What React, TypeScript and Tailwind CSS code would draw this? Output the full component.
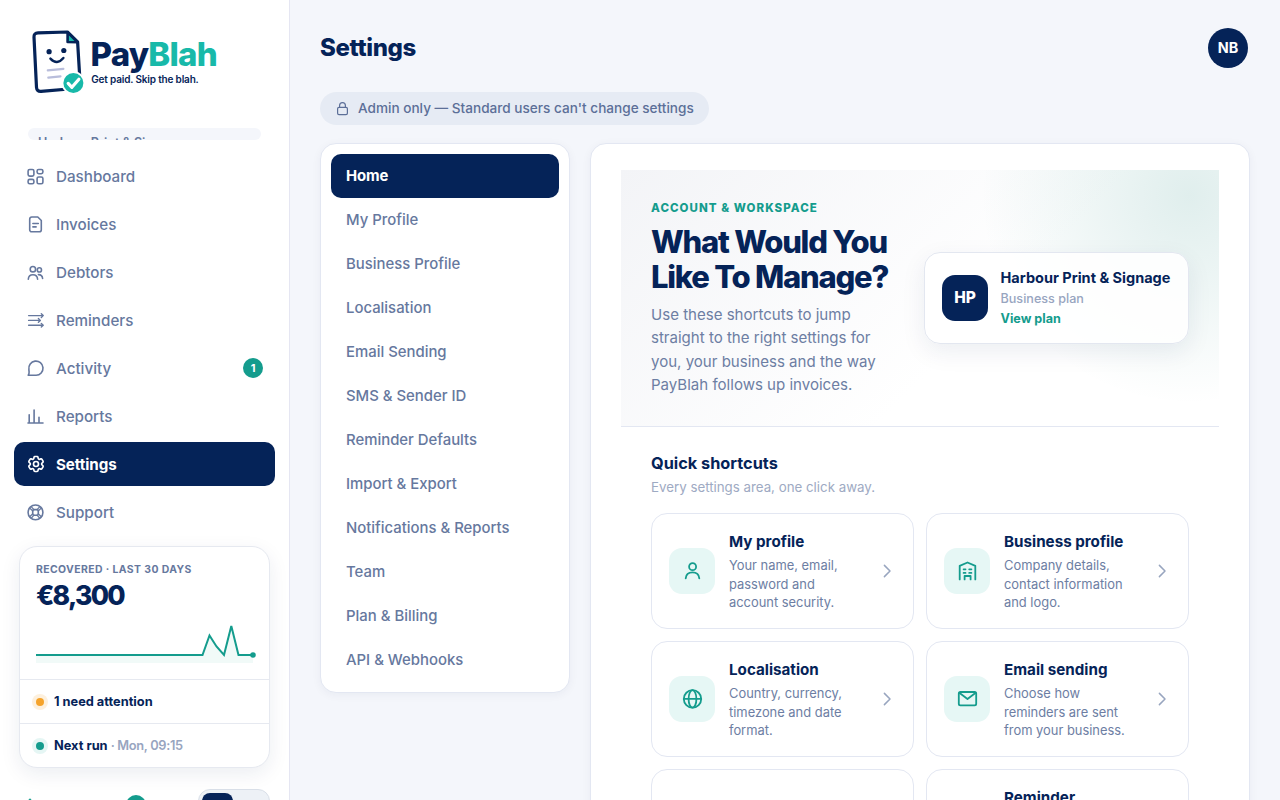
import React from 'react';
import { HiOutlineCog6Tooth } from 'react-icons/hi2';

interface NavItem {
  label: string;
  icon: React.ReactNode;
  badge?: number;
}

interface Shortcut {
  title: string;
  text: string;
  icon: React.ReactNode;
}

const NavSvg: React.FC<{ children: React.ReactNode }> = ({ children }) => (
  <svg
    className="w-5 h-5"
    viewBox="0 0 20 20"
    fill="none"
    stroke="currentColor"
    strokeWidth="1.6"
    strokeLinecap="round"
    strokeLinejoin="round"
  >
    {children}
  </svg>
);

const TileSvg: React.FC<{ children: React.ReactNode }> = ({ children }) => (
  <svg
    className="w-[22px] h-[22px]"
    viewBox="0 0 22 22"
    fill="none"
    stroke="currentColor"
    strokeWidth="1.8"
    strokeLinecap="round"
    strokeLinejoin="round"
  >
    {children}
  </svg>
);

const navItems: NavItem[] = [
  {
    label: 'Dashboard',
    icon: (
      <NavSvg>
        <rect x="2.1" y="3.5" width="5.8" height="6.6" rx="1.6" />
        <rect x="11.1" y="3.5" width="5.8" height="4.2" rx="1.6" />
        <rect x="2.1" y="13.4" width="5.8" height="4.4" rx="1.6" />
        <rect x="11.1" y="11" width="5.8" height="6.8" rx="1.6" />
      </NavSvg>
    ),
  },
  {
    label: 'Invoices',
    icon: (
      <NavSvg>
        <path d="M5.7 3h6.1l3.5 3.5v9.2a2.1 2.1 0 0 1-2.1 2.1H5.7a2 2 0 0 1-2-2.1V5.1A2 2 0 0 1 5.7 3Z" />
        <path d="M6.9 9.5h5.4M6.9 12.9h3.2" />
      </NavSvg>
    ),
  },
  {
    label: 'Debtors',
    icon: (
      <NavSvg>
        <circle cx="6.9" cy="7.2" r="2.7" />
        <circle cx="13.4" cy="7.9" r="2.1" />
        <path d="M2.3 17.2c.2-2.9 2-4.4 4.6-4.4s4.5 1.5 4.7 4.4" />
        <path d="M12.4 12.6c2.5 0 4 1.5 4.2 3.9" />
      </NavSvg>
    ),
  },
  {
    label: 'Reminders',
    icon: (
      <NavSvg>
        <path strokeWidth="1.4" d="M2.6 5.6h14M2.6 10.4h11.4M2.6 15.2h14" />
        <path strokeWidth="1.4" d="m15.3 3.8 1.9 1.8-1.9 1.8M12.4 8.6l1.9 1.8-1.9 1.8M15.3 13.4l1.9 1.8-1.9 1.8" />
      </NavSvg>
    ),
  },
  {
    label: 'Activity',
    badge: 1,
    icon: (
      <NavSvg>
        <path d="M2.2 17.3c.8-1 1-2 .9-3.4-.1-.9-.2-1.7-.2-2.5a7.1 7.1 0 1 1 7.2 5.9Z" />
      </NavSvg>
    ),
  },
  {
    label: 'Reports',
    icon: (
      <NavSvg>
        <path d="M2 17h15M3.2 16.6V8.7M8.1 16.6V4M13 16.6v-5.4" />
      </NavSvg>
    ),
  },
  { label: 'Settings', icon: <HiOutlineCog6Tooth className="w-5 h-5 -ml-[0.5px]" strokeWidth={2} /> },
  {
    label: 'Support',
    icon: (
      <NavSvg>
        <circle cx="9.5" cy="10.4" r="7.4" />
        <rect x="6.7" y="7.6" width="5.6" height="5.6" rx="1.5" />
        <path
          strokeWidth="1.2"
          d="M3.9 6.3 6.8 9M5.4 4.8 8 7.7M15.1 6.3 12.2 9M13.6 4.8 11 7.7M3.9 14.5l2.9-2.7M5.4 16 8 13.1M15.1 14.5l-2.9-2.7M13.6 16 11 13.1"
        />
      </NavSvg>
    ),
  },
];

const settingsTabs = [
  'Home',
  'My Profile',
  'Business Profile',
  'Localisation',
  'Email Sending',
  'SMS & Sender ID',
  'Reminder Defaults',
  'Import & Export',
  'Notifications & Reports',
  'Team',
  'Plan & Billing',
  'API & Webhooks',
];

const shortcuts: Shortcut[] = [
  {
    title: 'My profile',
    text: 'Your name, email, password and account security.',
    icon: (
      <TileSvg>
        <circle cx="11.6" cy="6.7" r="3.5" />
        <path d="M4.7 18.4c.3-3.9 2.8-6 6.8-6s6.5 2.1 6.8 6" />
      </TileSvg>
    ),
  },
  {
    title: 'Business profile',
    text: 'Company details, contact information and logo.',
    icon: (
      <TileSvg>
        <path d="M3.7 19.4V5.8L11.5 2.5l7.8 3.3v13.6" />
        <path d="M7.6 9.3h1.9M13.2 9.3h2.2M7.6 12.9h1.9M13.2 12.9h2.2M8.6 19.4v-3.4h6v3.4" />
      </TileSvg>
    ),
  },
  {
    title: 'Localisation',
    text: 'Country, currency, timezone and date format.',
    icon: (
      <TileSvg>
        <circle cx="11.5" cy="10.9" r="8.7" />
        <ellipse cx="11.5" cy="10.9" rx="3.9" ry="8.7" />
        <path d="M2.8 10.9h17.4" />
      </TileSvg>
    ),
  },
  {
    title: 'Email sending',
    text: 'Choose how reminders are sent from your business.',
    icon: (
      <TileSvg>
        <rect x="2.8" y="4" width="17.4" height="13.4" rx="1.6" />
        <path d="m3.6 5 7.9 6 7.9-6" />
      </TileSvg>
    ),
  },
  { title: '', text: '', icon: null },
  { title: 'Reminder defaults', text: '', icon: null },
];

const Logo = () => (
  <svg className="block w-[190px] h-[70px]" viewBox="0 0 190 70">
    <path
      d="M8 5.9 37.4 5 47.6 14.8 50.4 61 11 64.4Q6.8 64.7 6.5 60.4L4 10.2Q3.8 6 8 5.9Z"
      fill="#fff"
      stroke="#052358"
      strokeWidth="3.2"
      strokeLinejoin="round"
    />
    <path d="M37.6 5.4v9.6l9.8.2Z" fill="#18b9a9" stroke="#052358" strokeWidth="2.6" strokeLinejoin="round" />
    <circle cx="19.1" cy="24.7" r="2.6" fill="#052358" />
    <circle cx="33.8" cy="23.5" r="2.6" fill="#052358" />
    <path d="M20.4 31.6q6.6 7 13-.6" fill="none" stroke="#052358" strokeWidth="2.4" strokeLinecap="round" />
    <path d="m17.8 43.4 15.6-1.6M18.3 50.6l12.2-1.3" fill="none" stroke="#b8bddb" strokeWidth="2.2" strokeLinecap="round" />
    <circle cx="43.4" cy="56" r="11.8" fill="#fff" />
    <circle cx="43.4" cy="56" r="10" fill="#18b9a9" />
    <path d="m38.2 56.4 3.7 3.9 7-8.1" fill="none" stroke="#fff" strokeWidth="3.2" strokeLinecap="round" strokeLinejoin="round" />
    <text x="60.6" y="39.2" className="font-['Inter'] text-[33px] font-extrabold" textLength="127" lengthAdjust="spacing" fill="#052358">
      Pay<tspan fill="#18b9a9">Blah</tspan>
    </text>
    <text x="61.3" y="56" className="font-['Inter'] text-[10px] font-semibold" textLength="107.5" lengthAdjust="spacing" fill="#052358">
      Get paid. Skip the blah.
    </text>
  </svg>
);

const RecoveredCard = () => (
  <div className="mx-[5px] mt-3 bg-white border border-[#e6e9f0] rounded-[18px] shadow-[0_6px_20px_rgba(5,35,88,0.08)]">
    <div className="px-4 pt-4 h-[132px]">
      <div className="text-[10.4px] leading-[13px] font-bold tracking-[0.04em] text-[#66789e]">
        RECOVERED · LAST 30 DAYS
      </div>
      <div className="mt-[3px] text-[26.5px] leading-8 font-extrabold tracking-[-0.065em] text-[#052358]">€8,300</div>
      <svg className="block mt-2 w-[221px] h-[44px]" viewBox="0 0 221 44">
        <path d="M0 36H166.5L173.5 16.5 180.5 27.5 188 36 195.3 7 202.5 36H217V44H0Z" fill="#f1faf8" />
        <path d="M0 36H166.5L173.5 16.5 180.5 27.5 188 36 195.3 7 202.5 36H217" fill="none" stroke="#149c8d" strokeWidth="2" />
        <circle cx="217" cy="36" r="2.8" fill="#149c8d" />
      </svg>
    </div>
    <div className="flex items-center gap-[10px] h-11 px-4 border-t border-[#e6e9f0] text-[12.8px] font-bold text-[#052358]">
      <span className="w-2 h-2 rounded-full bg-[#f5a32b] shadow-[0_0_0_4px_#fdf0dd]" />
      1 need attention
    </div>
    <div className="flex items-center gap-[10px] h-11 px-4 border-t border-[#e6e9f0] text-[12.8px] font-bold text-[#052358]">
      <span className="w-2 h-2 rounded-full bg-[#149c8d] shadow-[0_0_0_4px_#e5f6f4]" />
      <span>
        Next run <span className="font-semibold tracking-[-0.025em] text-[#98a5bf]">· Mon, 09:15</span>
      </span>
    </div>
  </div>
);

const Sidebar = () => (
  <aside className="flex flex-col shrink-0 w-[290px] h-full bg-white border-r border-[#e5e6f2] overflow-hidden">
    <div className="pl-[30px] pt-[27px] h-[128px] shrink-0">
      <Logo />
    </div>
    <div className="mx-7 h-3 shrink-0 overflow-hidden rounded-lg bg-[#f4f6fb]">
      <div className="h-8 px-[10px] pt-[7px] text-[12.5px] leading-4 font-semibold text-[#66789e]">
        Harbour Print & Signage
      </div>
    </div>
    <nav className="flex flex-col gap-1 px-[14px] pt-[14px] shrink-0">
      {navItems.map(({ label, icon, badge }) => (
        <a
          key={label}
          className={`flex items-center h-11 px-3 rounded-[10px] text-[15.2px] ${
            label === 'Settings' ? 'bg-[#052358] text-white font-bold tracking-[-0.005em]' : 'text-[#66789e] font-medium'
          }`}
        >
          <span className="w-[30px]">{icon}</span>
          <span className="pt-[2px]">{label}</span>
          {badge && (
            <span className="flex items-center justify-center ml-auto w-5 h-5 rounded-full bg-[#149c8d] text-[11px] font-bold text-white">
              {badge}
            </span>
          )}
        </a>
      ))}
    </nav>
    <div className="px-[14px] shrink-0">
      <RecoveredCard />
    </div>
    {/* Language and theme footer, runs past the fold */}
    <div className="flex items-start mt-[21px] pl-[26px] pr-[19px] shrink-0">
      <span className="mt-[11px] w-2 h-2 rotate-45 bg-[#149c8d]" />
      <span className="ml-[92px] mt-[6px] w-5 h-5 rounded-full bg-[#149c8d]" />
      <div className="ml-auto p-[3px] w-[72px] h-9 rounded-xl border border-[#d9dfe8] bg-[#edf1f6]">
        <div className="w-[31px] h-7 rounded-lg bg-[#052358]" />
      </div>
    </div>
  </aside>
);

const Hero = () => (
  <section className="flex items-center justify-between h-[257px] px-[30px] border-b border-[#e3e7f2] bg-[radial-gradient(circle_at_95%_10%,rgba(15,125,115,0.13),transparent_34%),linear-gradient(135deg,#f3f4f7_0%,#fff_60%)]">
    <div className="w-[245px]">
      <div className="text-[11.5px] leading-4 font-extrabold tracking-[0.092em] text-[#149c8d]">ACCOUNT & WORKSPACE</div>
      <h2 className="mt-2 text-[31px] leading-[35px] font-extrabold tracking-[-0.04em] text-[#052358]">
        What Would You
        <br />
        Like To Manage?
      </h2>
      <p className="mt-[9px] text-[15.05px] leading-[23.4px] text-[#6d7ea3]">
        Use these shortcuts to jump
        <br />
        straight to the right settings for
        <br />
        you, your business and the way
        <br />
        PayBlah follows up invoices.
      </p>
    </div>
    <div className="flex items-center gap-3 w-[265px] h-[92px] pl-[17px] rounded-2xl border border-[#e3e7f0] bg-white/90 shadow-[0_8px_24px_rgba(5,35,88,0.08)]">
      <div className="flex items-center justify-center shrink-0 w-[46px] h-[46px] rounded-[13px] bg-[#052358] text-[15.5px] font-extrabold text-white">
        HP
      </div>
      <div className="pt-px pl-[0.5px] whitespace-nowrap">
        <div className="-mt-px text-[14.5px] leading-5 font-bold text-[#052358]">Harbour Print & Signage</div>
        <div className="mt-px text-[12.6px] leading-5 font-medium text-[#98a5bf]">Business plan</div>
        <div className="text-[12.6px] leading-5 font-bold text-[#149c8d]">View plan</div>
      </div>
    </div>
  </section>
);

const ShortcutCard: React.FC<Shortcut> = ({ title, text, icon }) => (
  <a className="flex items-center h-[116px] pl-[17px] pr-4 rounded-2xl border border-[#e3e7f2] bg-white">
    {icon && (
      <span className="flex items-center justify-center shrink-0 w-[46px] h-[46px] rounded-[13px] bg-[#e6f7f5] text-[#149c8d]">
        {icon}
      </span>
    )}
    <span className={`flex flex-col self-start mt-[17px] w-[126px] ${icon ? 'ml-[14px]' : 'ml-[60px]'}`}>
      <span className="text-[15.2px] leading-[22px] font-bold text-[#052358]">{title}</span>
      <span className="mt-1 text-[12.9px] leading-[18.5px] text-[#6d7ea3]">{text}</span>
    </span>
    <svg className="ml-auto w-5 h-5 text-[#98a5bf]" viewBox="0 0 20 20" fill="none" stroke="currentColor" strokeWidth="1.5" strokeLinecap="round" strokeLinejoin="round">
      <path d="m7.4 4.4 5.6 5.6-5.6 5.6" />
    </svg>
  </a>
);

const App = () => {
  return (
    <div className="flex w-full h-screen overflow-hidden bg-[#f4f6fb] font-['Inter',sans-serif]">
      <Sidebar />
      <main className="flex-1 min-w-0 pl-[30px] pr-[30px] pt-7">
        <header className="flex items-center justify-between h-10 pr-[2px]">
          <h1 className="text-2xl font-extrabold tracking-[-0.015em] text-[#052358]">Settings</h1>
          <div className="flex items-center justify-center w-10 h-10 rounded-full bg-[#052358] text-[14.4px] font-bold text-white">
            NB
          </div>
        </header>

        <div className="flex items-center mt-6 w-[389px] h-[33px] pl-4 rounded-full bg-[#e6ebf4] text-[13.6px] font-medium whitespace-nowrap text-[#5c6f98]">
          <svg className="mr-2 w-[14px] h-[15px]" viewBox="0 0 14 15" fill="none" stroke="currentColor" strokeWidth="1.2">
            <rect x="1.6" y="6.4" width="9.8" height="7.2" rx="1.4" />
            <path d="M3.6 6.4V4.6a2.9 2.9 0 0 1 5.8 0v1.8" />
          </svg>
          Admin only — Standard users can't change settings
        </div>

        <div className="flex items-start gap-5 mt-[18px]">
          <nav className="w-[250px] p-[10px] rounded-2xl border border-[#e3e7f2] bg-white shadow-[0_2px_10px_rgba(5,35,88,0.05)]">
            {settingsTabs.map((tab, i) => (
              <a
                key={tab}
                className={`flex items-center h-11 px-[15px] rounded-[10px] text-[14.9px] ${
                  i === 0 ? 'bg-[#052358] text-white font-bold tracking-[-0.01em]' : 'text-[#66789e] font-medium'
                }`}
              >
                {tab}
              </a>
            ))}
          </nav>

          <div className="flex-1 h-[900px] px-[30px] pt-[26px] rounded-2xl border border-[#e3e7f2] bg-white shadow-[0_2px_10px_rgba(5,35,88,0.05)]">
            <Hero />
            <section className="px-[30px] pt-6">
              <h3 className="text-[16.3px] leading-6 font-bold text-[#052358]">Quick shortcuts</h3>
              <p className="mt-[2px] text-[13.3px] leading-5 text-[#9eaac3]">Every settings area, one click away.</p>
              <div className="grid grid-cols-2 gap-3 mt-4">
                {shortcuts.map((s, i) => (
                  <ShortcutCard key={i} {...s} />
                ))}
              </div>
            </section>
          </div>
        </div>
      </main>
    </div>
  );
};

export default App;
